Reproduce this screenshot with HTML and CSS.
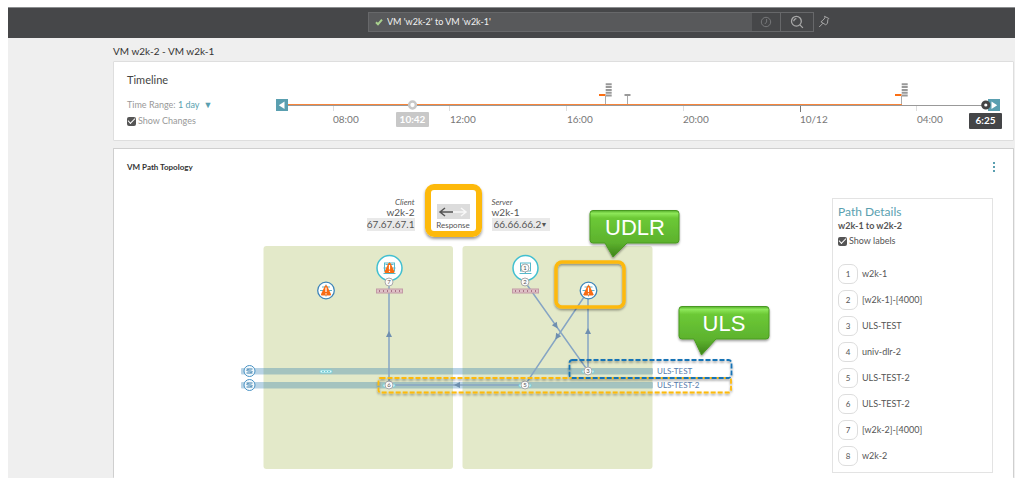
FILE: index.html
```html
<!DOCTYPE html>
<html lang="en">
<head>
<meta charset="utf-8">
<title>VM w2k-2 - VM w2k-1</title>
<link rel="stylesheet" href="styles.css">
</head>
<body>
<div class="page">
  <header class="topbar">
    <form class="search">
      <label class="query">
        <svg class="tick" viewBox="0 0 8 8"><path d="M1 4.200l2 2L7 1.700"/></svg>
        <input class="query-input" type="text" aria-label="Search" value="VM 'w2k-2' to VM 'w2k-1'">
      </label>
      <button class="search-button history" type="button" aria-label="History">
        <svg viewBox="0 0 12 12"><circle cx="6" cy="6" r="4.700"/><path d="M6.600 3v3L4.800 8"/></svg>
      </button>
      <button class="search-button find" type="button" aria-label="Find">
        <svg viewBox="0 0 14 14"><circle cx="6.400" cy="6.200" r="4.900"/><path d="M3.800 6.200a2.600 2.600 0 0 1 2.600-2.600M9.900 9.900l3 3"/></svg>
      </button>
    </form>
    <button class="pin" type="button" aria-label="Pin">
      <svg viewBox="0 0 12 13"><path d="M6.500 1.300l4.300 2.200-1 1.200-.3 3.600-1.800 1.500-4.800-3 2-1.500L7 2.800zM5 8.200L1.200 12"/></svg>
    </button>
  </header>

  <main class="main">
    <h1 class="title">VM w2k-2 - VM w2k-1</h1>

    <section class="card timeline">
      <div class="timeline-side">
        <h2 class="timeline-title">Timeline</h2>
        <button class="range" type="button">Time Range: <span class="range-value">1 day <span class="caret">▼</span></span></button>
        <label class="check muted"><input class="box" type="checkbox" checked>Show Changes</label>
      </div>
      <svg class="axis" viewBox="270 75 737 58">
        <path class="tick-light" d="M333.500 106v5M449.500 106v5M566.500 106v5M683.500 106v5M916.500 106v5"/>
        <path class="tick-dark" d="M800.500 106v6"/>
        <path class="line-gray" d="M288 105.500h700"/>
        <path class="line-orange" d="M288 104.500h614"/>
        <path class="marker-stem" d="M605.500 96v8M627.500 96v8M901.500 96v8"/>
        <path class="marker-orange" d="M599 95h6.500M895 95h6.500"/>
        <path class="marker-cap" d="M624.500 95h6"/>
        <path class="marker-stack" d="M608.700 83.300v13.400M904.700 83.300v13.400"/>
        <rect class="end" x="276" y="99" width="12" height="12"/>
        <path class="end-arrow" d="M284.500 101.500v7.400l-5.700-3.700z"/>
        <circle class="stop" cx="412.500" cy="105" r="3.400"/>
        <rect class="end" x="988" y="99" width="12" height="12"/>
        <path class="end-arrow" d="M991.500 101.500v7.400l5.700-3.700z"/>
        <circle class="stop dark" cx="985.800" cy="105" r="3.100"/>
        <rect class="stamp" x="396" y="112" width="33" height="15" rx="1"/>
        <rect class="stamp-dark" x="969" y="113" width="33" height="16" rx="1"/>
        <g class="hours">
          <text x="333" y="123">08:00</text>
          <text x="450" y="123">12:00</text>
          <text x="567" y="123">16:00</text>
          <text x="683" y="123">20:00</text>
          <text x="800" y="123">10/12</text>
          <text x="917" y="123">04:00</text>
        </g>
        <text class="stamp-text" x="412.500" y="123">10:42</text>
        <text class="stamp-text" x="985.500" y="124">6:25</text>
      </svg>
    </section>

    <section class="card topology">
      <header class="topology-head">
        <h2 class="topology-title">VM Path Topology</h2>
        <button class="kebab" type="button" aria-label="More options"><i></i><i></i><i></i></button>
      </header>
      <div class="topology-body">
        <div class="canvas">
          <svg class="diagram" viewBox="127 180 705 292">
            <defs>
              <linearGradient id="green" x1="0" y1="0" x2="0" y2="1">
                <stop offset="0" stop-color="#55ad2a"/>
                <stop offset=".06" stop-color="#8ee85a"/>
                <stop offset=".16" stop-color="#6cc936"/>
                <stop offset=".7" stop-color="#5cb12d"/>
                <stop offset="1" stop-color="#3c8219"/>
              </linearGradient>
              <filter id="shadow" x="-20%" y="-20%" width="140%" height="150%">
                <feDropShadow dx="0" dy="1.500" stdDeviation="1" flood-opacity=".4"/>
              </filter>
              <g id="warning">
                <path d="M-6 0H6M0-6V6M-4-3.500H4M-4 3.500H4" stroke="#5eb4cc" stroke-width="1"/>
                <path d="M-1.200-4.500Q0-6 1.200-4.500L5 3.800Q5 5 4 5H-4Q-5 5-5 3.800z" fill="#f96b12"/>
                <path d="M0-3V1.500M0 2.700V4" stroke="#fff" stroke-width="1.200"/>
              </g>
              <g id="monitor" fill="none" stroke="#56b9cc">
                <rect x="-5" y="-5" width="10" height="8"/>
                <path d="M0 3V5M-6 5.500H6"/>
              </g>
              <g id="switch">
                <circle r="5.500" fill="#f4fafd" stroke="#4a93c5" stroke-width="1"/>
                <path d="M-3-2H3M-2 0H2M-3 2H3M-1-2L-3 0M1 2L3 0" fill="none" stroke="#397fae" stroke-width="1"/>
              </g>
              <g id="firewall">
                <rect x="-13" y="-2" width="26" height="4" fill="#dfc1c7" stroke="#c39ba6" stroke-width="1"/>
                <path d="M-10-1v2M-6-1v2M-2-1v2M2-1v2M6-1v2M10-1v2" stroke="#a97585"/>
              </g>
              <g id="port">
                <rect x="-6" y="-1.500" width="12" height="3" rx="1" fill="#e3fafa" stroke="#79ced8"/>
                <path d="M-4 0H4" stroke="#79ced8" stroke-width="1" stroke-dasharray="2 1"/>
              </g>
            </defs>

            <rect class="zone" x="263.500" y="246" width="189.500" height="223" rx="3"/>
            <rect class="zone" x="462.500" y="246" width="190" height="223" rx="3"/>
            <rect class="band" x="241" y="368" width="412" height="6.500" rx="1"/>
            <rect class="band" x="241" y="382" width="412" height="6.500" rx="1"/>

            <path class="route" d="M389 385V282M525 282L588 371V291L525 385H389"/>
            <g class="heading">
              <path d="M0-3L3 3H-3z" transform="translate(389 334)"/>
              <path d="M0-3L3 3H-3z" transform="translate(588 331)"/>
              <path d="M0-3L3 3H-3z" transform="translate(457 385) rotate(-90)"/>
              <path d="M0-3L3 3H-3z" transform="translate(556 326) rotate(145)"/>
              <path d="M0-3L3 3H-3z" transform="translate(557 337) rotate(214)"/>
            </g>

            <use href="#switch" x="249.500" y="371"/>
            <use href="#switch" x="249.500" y="385"/>
            <use href="#port" x="326" y="371.500"/>
            <use href="#port" x="389" y="385.500"/>
            <use href="#port" x="525" y="385.500"/>
            <use href="#port" x="588" y="371.500"/>
            <use href="#firewall" x="389.500" y="291"/>
            <use href="#firewall" x="525.500" y="291"/>

            <circle class="host" cx="389.500" cy="268" r="12.500"/>
            <use href="#monitor" x="389.500" y="268"/>
            <use href="#warning" x="389.500" y="268"/>
            <circle class="host" cx="525.500" cy="268" r="12.500"/>
            <use href="#monitor" x="525.500" y="268"/>
            <circle class="router" cx="326" cy="290.500" r="8.300"/>
            <use href="#warning" x="326" y="290.500"/>
            <circle class="router" cx="588.500" cy="290.500" r="8.300"/>
            <use href="#warning" x="588.500" y="290.500"/>

            <g class="step">
              <circle cx="525" cy="268" r="4"/><text x="525" y="270">1</text>
              <circle cx="525" cy="282" r="4"/><text x="525" y="284">2</text>
              <circle cx="588" cy="371" r="4"/><text x="588" y="373">3</text>
              <circle cx="525" cy="385" r="4"/><text x="525" y="387">5</text>
              <circle cx="389" cy="385" r="4"/><text x="389" y="387">6</text>
              <circle cx="389" cy="282" r="4"/><text x="389" y="284">7</text>
            </g>
            <text class="segment" x="657" y="374">ULS-TEST</text>
            <text class="segment" x="657" y="388">ULS-TEST-2</text>

            <g filter="url(#shadow)">
              <rect class="dash yellow" x="378.500" y="378" width="352.500" height="14.500" rx="2"/>
              <rect class="dash blue" x="569.500" y="360" width="162" height="18" rx="3"/>
              <rect class="outline" x="556" y="262" width="68" height="45" rx="6"/>
            </g>
            <g filter="url(#shadow)">
              <path class="callout" d="M593 210.500H676q3 0 3 3V240q0 3-3 3H627L613 257 605 243H593q-3 0-3-3V213.500q0-3 3-3z"/>
              <path class="callout" d="M682 306.500H766q3 0 3 3V336q0 3-3 3H716L701.500 355 694 339H682q-3 0-3-3V309.500q0-3 3-3z"/>
            </g>
            <text class="callout-text" x="635" y="235">UDLR</text>
            <text class="callout-text" x="724" y="331">ULS</text>
          </svg>

          <div class="endpoints">
            <div class="endpoint client">
              <em>Client</em>
              <span>w2k-2</span>
              <span class="address">67.67.67.1</span>
            </div>
            <div class="direction">
              <button class="swap" type="button" aria-labelledby="direction-label">
                <svg viewBox="0 0 30 12"><path class="back" d="M15 6H2M7 2L2 6l5 4"/><path class="forth" d="M15 6h13M23 2l5 4-5 4"/></svg>
              </button>
              <span id="direction-label">Response</span>
            </div>
            <div class="endpoint server">
              <em>Server</em>
              <label for="server-address">w2k-1</label>
              <span class="picker">
                <select id="server-address" class="address select"><option>66.66.66.2</option></select>
                <span class="picker-caret" aria-hidden="true">▼</span>
              </span>
            </div>
          </div>
        </div>

        <aside class="details">
          <h3 class="details-title">Path Details</h3>
          <p class="details-path">w2k-1 to w2k-2</p>
          <label class="check"><input class="box" type="checkbox" checked>Show labels</label>
          <ol class="hops">
            <li><span class="hop">1</span>w2k-1</li>
            <li><span class="hop">2</span>[w2k-1]-[4000]</li>
            <li><span class="hop">3</span>ULS-TEST</li>
            <li><span class="hop">4</span>univ-dlr-2</li>
            <li><span class="hop">5</span>ULS-TEST-2</li>
            <li><span class="hop">6</span>ULS-TEST-2</li>
            <li><span class="hop">7</span>[w2k-2]-[4000]</li>
            <li><span class="hop">8</span>w2k-2</li>
          </ol>
        </aside>
      </div>
    </section>
  </main>
</div>
</body>
</html>
```
FILE: styles.css
```css
* { box-sizing: border-box; }
body {
  margin: 0;
  background: #fff;
  color: #555;
  font: 9px/16px Lato, "Open Sans", sans-serif;
}
h1, h2, h3, p, ol { margin: 0; padding: 0; }
button, input, select { font: inherit; color: inherit; border: 0; padding: 0; margin: 0; background: none; }
.page { padding: 7px 9px 8px 8px; }

.topbar {
  display: flex;
  align-items: center;
  gap: 4px;
  height: 31px;
  padding: 0 185px 3px 360px;
  background: #464749;
  border-top: 1px solid #8b8d8f;
}
.search {
  display: flex;
  flex: 1;
  height: 20px;
  border: 1px solid #67686a;
  background: #58595b;
}
.query { display: flex; flex: 1; align-items: center; gap: 4px; padding-left: 6px; }
.query-input { flex: 1; min-width: 0; color: #f2f2f2; font-size: 9px; }
.tick { width: 8px; height: 8px; fill: none; stroke: #a9d18e; stroke-width: 2; }
.search-button { display: grid; place-items: center; background: #464749; }
.history { width: 28px; }
.find { width: 33px; border-left: 1px solid #67686a; }
.search-button svg, .pin svg { display: block; fill: none; stroke: #a8a8a8; }
.history svg { width: 12px; stroke: #77787a; }
.find svg { width: 14px; stroke-width: 1.300; }
.pin svg { width: 12px; height: 13px; }

.main { padding: 5px 1px 0 105px; background: #efefef; }
.title { margin-bottom: 2px; font-size: 10px; font-weight: 400; color: #333; }
.card { background: #fff; border: 1px solid #dedede; border-radius: 1px; }

.timeline { display: flex; padding: 10px 6px 11px 13px; margin-bottom: 7px; }
.timeline-side { display: flex; flex-direction: column; align-items: flex-start; flex: 0 0 143px; }
.timeline-title { margin-bottom: 9px; font-size: 11px; font-weight: 400; color: #444; }
.range { height: 16px; color: #999; }
.range-value { color: #5a9fb0; }
.caret { margin-left: 2px; font-size: 9px; line-height: 9px; }
.check { display: flex; align-items: center; gap: 2px; color: #555; }
.muted { color: #999; }
.box { appearance: none; display: grid; place-items: center; width: 9px; height: 9px; border-radius: 2px; background: #555; }
.box:checked::after { content: ""; width: 6px; height: 3px; margin-bottom: 2px; border: solid #fff; border-width: 0 0 1px 1px; transform: rotate(-45deg); }

.axis { flex: 1; min-width: 0; align-self: flex-start; margin-top: 3px; margin-bottom: -5px; }
.axis path { fill: none; }
.tick-light { stroke: #ddd; }
.tick-dark { stroke: #777; }
.line-gray { stroke: #999; }
.line-orange { stroke: #f8853a; }
.marker-stem { stroke: #aaa; }
.marker-orange { stroke: #fb6f14; stroke-width: 2; }
.marker-cap { stroke: #999; stroke-width: 2; }
.marker-stack { stroke: #999; stroke-width: 6; stroke-dasharray: 2 .8; }
.end { fill: #5a9fb0; }
.axis .end-arrow { fill: #fff; }
.stop { fill: #fff; stroke: #c8c8c8; stroke-width: 2.500; }
.stop.dark { stroke: #444; stroke-width: 3; }
.stamp { fill: #c8c8c8; }
.stamp-dark { fill: #444547; }
.hours { fill: #777; font-size: 10px; }
.stamp-text { fill: #fff; font-size: 10px; font-weight: 700; text-anchor: middle; }

.topology { border-bottom: 0; padding: 10px 20px 5px 13px; border-color: #cfcfcf; }
.topology-head { display: flex; justify-content: space-between; margin: 0 -2px 5px 0; }
.topology-title { font-size: 8px; font-weight: 700; color: #333; }
.kebab { display: flex; flex-direction: column; justify-content: center; gap: 2px; }
.kebab i { width: 2px; height: 2px; background: #5a9fb0; }
.topology-body { display: flex; align-items: flex-start; }
.canvas { display: grid; flex: 1; min-width: 0; }
.diagram, .endpoints { grid-area: 1 / 1; }
.diagram { width: 100%; height: 292px; }

.endpoints {
  display: grid;
  grid-template-columns: 1fr auto 1fr;
  align-items: start;
  align-self: start;
  gap: 10px;
  padding: 4px 53px 0 0;
}
.endpoint { display: flex; flex-direction: column; padding-top: 13px; font-size: 10px; line-height: 10px; }
.endpoint em { font-size: 8px; }
.client { align-items: flex-end; }
.server { align-items: flex-start; }
.address { height: 13px; margin-top: 1px; background: #e9e9e9; font-size: 10px; line-height: 13px; }
.picker { position: relative; display: flex; }
.select { appearance: none; width: 58px; padding-left: 2px; }
.picker-caret { position: absolute; right: 2px; top: 2px; font-size: 7px; pointer-events: none; }
.direction {
  display: flex;
  flex-direction: column;
  align-items: center;
  width: 57px;
  height: 53px;
  padding-top: 14px;
  border: 6px solid #fdb90b;
  border-radius: 9px;
  box-shadow: 0 2px 3px rgba(0, 0, 0, .4);
  font-size: 8px;
  line-height: 12px;
}
.swap { flex: none; width: 33px; height: 15px; background: #dcdcdc; }
.swap svg { display: block; width: 30px; height: 12px; margin: auto; fill: none; stroke-width: 1.500; }
.back { stroke: #555; }
.forth { stroke: #f8f8f8; }

.zone { fill: #e3e9c9; }
.band { fill: rgba(20, 110, 170, .3); }
.route { fill: none; stroke: #86a5c4; stroke-width: 1.500; }
.heading { fill: #6f8fb0; }
.host { fill: #fff; stroke: #41bfd0; stroke-width: 1.500; }
.router { fill: #fff; stroke: #3f85b9; stroke-width: 1.300; }
.step circle { fill: #fafafa; stroke: #aaa; }
.step text { fill: #555; font-size: 6px; text-anchor: middle; }
.segment { fill: #557bab; font-size: 8px; }
.dash { fill: none; stroke-width: 1.800; stroke-dasharray: 5 2; }
.yellow { stroke: #fdb90b; }
.blue { stroke: #1673b5; }
.outline { fill: none; stroke: #fdb90b; stroke-width: 3.500; }
.callout { fill: url(#green); stroke: #4a9a22; }
.callout-text { fill: #fff; font: 22px "Liberation Sans", Arial, sans-serif; text-anchor: middle; }

.details { flex: 0 0 161px; margin-top: 18px; padding: 5px 5px 3px; border: 1px solid #e3e3e3; }
.details-title { font-size: 12px; font-weight: 400; color: #5a9fb0; }
.details-path { font-weight: 700; line-height: 11px; margin-bottom: 2px; }
.hops { margin-top: 12px; list-style: none; }
.hops li { display: flex; align-items: center; gap: 4px; height: 26px; }
.hop { width: 20px; height: 20px; border: 1px solid #ddd; border-radius: 7px; font-size: 8px; line-height: 18px; text-align: center; }
```
